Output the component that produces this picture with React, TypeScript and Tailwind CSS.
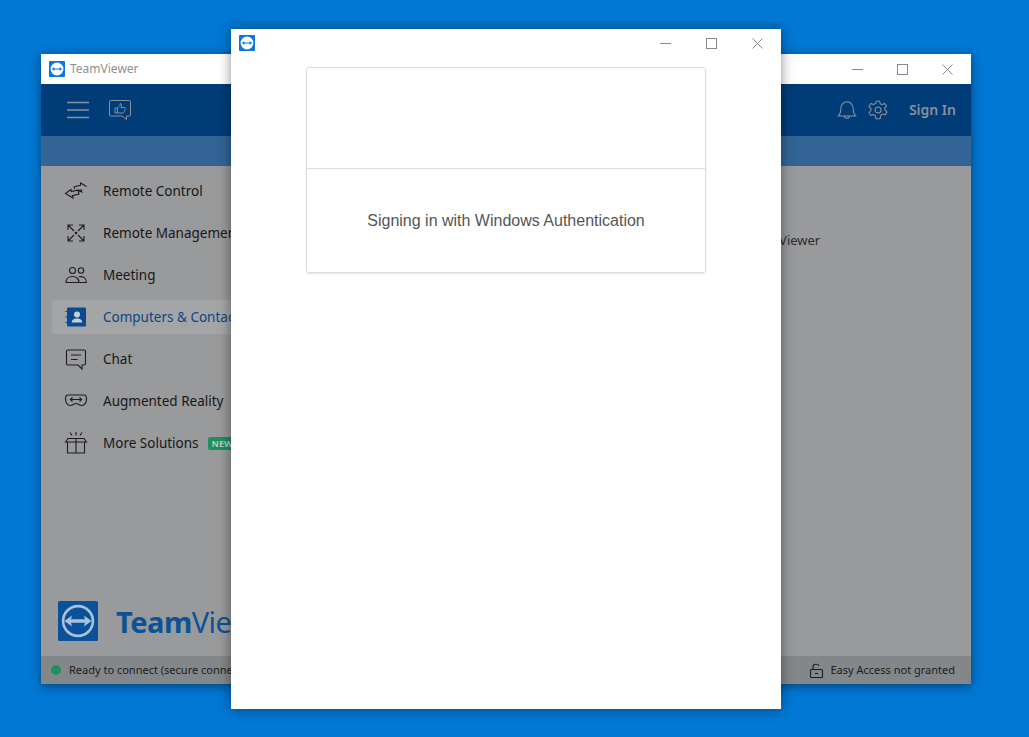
import React from "react";

function Logo({ size, radius = 1 }: { size: number; radius?: number }) {
  return (
    <svg width={size} height={size} viewBox="0 0 40 40" className="shrink-0">
      <rect width="40" height="40" rx={radius} fill="currentColor" />
      <circle cx="20" cy="20" r="16.2" fill="#ffffff" fillOpacity="var(--lo)" />
      <circle cx="20" cy="20" r="13.6" fill="currentColor" />
      <path d="M6.5 20 L14 14.6 L13 18.3 H27 L26 14.6 L33.5 20 L26 25.4 L27 21.7 H13 L14 25.4 Z" fill="#ffffff" fillOpacity="var(--lo)" />
    </svg>
  );
}

function SmallLogo() {
  return (
    <svg width="16" height="16" viewBox="0 0 16 16" className="shrink-0">
      <rect width="16" height="16" rx="1" fill="#0e74e0" />
      <circle cx="8" cy="8" r="6.4" fill="#ffffff" />
      <path d="M2.8 8 L5.6 6 L5.3 7.4 H10.7 L10.4 6 L13.2 8 L10.4 10 L10.7 8.6 H5.3 L5.6 10 Z" fill="#0e74e0" />
    </svg>
  );
}

function WinControls({ gap }: { gap: string }) {
  return (
    <div className={`flex items-center text-[#8a8a8a] ${gap}`}>
      <svg width="11" height="11" viewBox="0 0 11 11"><path d="M0 5.5 H11" stroke="currentColor" fill="none" /></svg>
      <svg width="11" height="11" viewBox="0 0 11 11"><rect x="0.5" y="0.5" width="10" height="10" stroke="currentColor" fill="none" /></svg>
      <svg width="11" height="11" viewBox="0 0 11 11"><path d="M0.5 0.5 L10.5 10.5 M10.5 0.5 L0.5 10.5" stroke="currentColor" fill="none" /></svg>
    </div>
  );
}

const ic = { fill: "none", stroke: "currentColor", strokeWidth: 1.1 } as const;

const items: { label: string; icon: React.ReactNode; active?: boolean; badge?: boolean }[] = [
  {
    label: "Remote Control",
    icon: (
      <svg width="24" height="24" viewBox="0 0 24 24" {...ic}>
        <path d="M1.5 14.5 L7 10.5 L7.4 12.6 L14 11 L15 15 L8.4 16.7 L9 19 Z" />
        <path d="M22.5 7.5 L16.6 4 L16.5 6.2 L10 7.8 L10.6 9.8 M14.6 11.6 L17.4 11 L17.8 13 Z" />
      </svg>
    ),
  },
  {
    label: "Remote Management",
    icon: (
      <svg width="24" height="24" viewBox="0 0 24 24" {...ic}>
        <circle cx="12" cy="12" r="1.3" fill="currentColor" stroke="none" />
        <path d="M4 9 V4 H9 M4 4 L10 10 M20 9 V4 H15 M20 4 L14 10 M4 15 V20 H9 M4 20 L10 14 M20 15 V20 H15 M20 20 L14 14" />
      </svg>
    ),
  },
  {
    label: "Meeting",
    icon: (
      <svg width="24" height="24" viewBox="0 0 24 24" {...ic}>
        <circle cx="8.5" cy="7.5" r="3" />
        <circle cx="17" cy="7.5" r="2.7" />
        <path d="M2 19.5 C2 15.5 5 13.5 8.5 13.5 C12 13.5 15 15.5 15 19.5 Z" />
        <path d="M15 13.8 C19 13 22.5 15 22.5 19.5 H15.5" />
      </svg>
    ),
  },
  {
    label: "Computers & Contacts",
    active: true,
    icon: (
      <svg width="24" height="24" viewBox="0 0 24 24">
        <rect x="3" y="2.5" width="19" height="19" rx="1" fill="#0a4a90" />
        <circle cx="13" cy="9.5" r="3" fill="#c8cdd3" />
        <path d="M7.8 17.5 C7.8 14.5 10 13.5 13 13.5 C16 13.5 18.2 14.5 18.2 17.5 Z" fill="#c8cdd3" />
        <path d="M1.5 6.5 H4.5 M1.5 12 H4.5 M1.5 17.5 H4.5" stroke="#0a4a90" strokeWidth="1.2" />
      </svg>
    ),
  },
  {
    label: "Chat",
    icon: (
      <svg width="24" height="24" viewBox="0 0 24 24" {...ic}>
        <path d="M4 3 H20 A1.5 1.5 0 0 1 21.5 4.5 V16.5 A1.5 1.5 0 0 1 20 18 H18 V22 L14 18 H4 A1.5 1.5 0 0 1 2.500 16.5 V4.500 A1.500 1.500 0 0 1 4 3 Z" />
        <path d="M7 8 H17 M7 12.500 H13.500" />
      </svg>
    ),
  },
  {
    label: "Augmented Reality",
    icon: (
      <svg width="24" height="24" viewBox="0 0 24 24" {...ic}>
        <path d="M4 6 H20 C22 6 22.500 7.500 22.500 9.500 C22.500 13.500 21 16.500 17.500 16.500 C15 16.500 14.500 14.500 12 14.500 C9.500 14.500 9 16.500 6.500 16.500 C3 16.500 1.500 13.500 1.500 9.500 C1.500 7.500 2 6 4 6 Z" />
        <path d="M6.500 10.500 H17.500 M8.500 8.500 L6.500 10.500 L8.500 12.500 M15.500 8.500 L17.500 10.500 L15.500 12.500" />
      </svg>
    ),
    badge: true,
  },
  {
    label: "More Solutions",
    icon: (
      <svg width="24" height="24" viewBox="0 0 24 24" {...ic}>
        <path d="M3.500 11 V22 H20.500 V11 M1.500 11 L4 7.500 H20 L22.500 11 Z M12 7.500 V22" />
        <path d="M12 1 V4.500 M6 1.500 L8 4.500 M18 1.500 L16 4.500" />
      </svg>
    ),
    badge: true,
  },
];

export default function App() {
  return (
    <div
      className="relative h-[737px] w-[1029px] overflow-hidden bg-[#0078d4]"
      style={{ fontFamily: '"Noto Sans", sans-serif' }}
    >
      {/* Back window */}
      <div className="absolute left-[41px] top-[54px] flex h-[630px] w-[930px] flex-col bg-[#999a9b] shadow-[0_2px_10px_rgba(0,0,0,0.45)]">
        <div className="flex h-[30px] shrink-0 items-center justify-between bg-white pl-2 pr-[18px]">
          <div className="flex items-center gap-[5px]">
            <SmallLogo />
            <span className="text-xs text-[#8e8e8e]">TeamViewer</span>
          </div>
          <WinControls gap="gap-[34px]" />
        </div>

        <div className="flex h-[52px] shrink-0 items-center justify-between bg-[#003c78] pl-[26px] pr-[15px] text-[#8c9098]">
          <div className="flex items-center gap-[20px]">
            <svg width="22" height="18" viewBox="0 0 22 18" fill="none" stroke="currentColor" strokeWidth="1.6">
              <path d="M0 1.500 H22 M0 9 H22 M0 16.500 H22" />
            </svg>
            <svg width="22" height="20" viewBox="0 0 22 20" {...ic} strokeWidth="1">
              <path d="M1.500 0.500 H20.500 A1 1 0 0 1 21.500 1.500 V15 A1 1 0 0 1 20.500 16 H17.500 V19.500 L13 16 H1.500 A1 1 0 0 1 0.500 15 V1.500 A1 1 0 0 1 1.500 0.500 Z" />
              <path d="M6 8 H8.500 V13 H6 Z M8.500 8 L11 5.500 V3.500 C12.500 3.500 12.800 5 12 7.500 H15.500 C16.500 7.500 16.500 9 15.800 9.500 C16.300 10.500 15.800 11.500 15 11.800 C15 12.800 14.500 13 13.500 13 H10 L8.500 12.300" />
            </svg>
          </div>
          <div className="flex items-center">
            <svg width="20" height="20" viewBox="0 0 20 20" {...ic} className="mr-[11px]">
              <path d="M1.500 16 C3 14.500 3.700 13 3.700 9.500 C3.700 5 6.500 1.700 10 1.700 C13.500 1.700 16.300 5 16.300 9.500 C16.300 13 17 14.500 18.500 16 Z" />
              <path d="M7.500 16 C7.500 19 12.500 19 12.500 16" />
            </svg>
            <svg width="20" height="20" viewBox="0 0 24 24" fill="none" stroke="currentColor" strokeWidth="1.300" className="mr-[21px]">
              <circle cx="12" cy="12" r="3.600" />
              <path d="M10 1.500 H14 L14.700 4.600 L17.200 5.600 L19.900 4 L22.300 7.200 L20 9.400 L20.400 12 L22.800 14.300 L20.500 17.800 L17.500 16.800 L15.200 18.600 L14.500 22.500 H9.500 L8.800 18.800 L6.500 17.500 L3.500 18.600 L1.300 15 L3.600 12.600 L3.400 10 L1.200 7.800 L3.400 4.300 L6.500 5.400 L9 4.200 Z" strokeLinejoin="round" />
            </svg>
            <span className="text-sm font-semibold">Sign In</span>
          </div>
        </div>

        <div className="h-[30px] shrink-0 bg-[#336496]" />

        <div className="flex min-h-0 flex-1">
          <nav className="flex w-[230px] shrink-0 flex-col gap-[8px] pl-[11px] pt-[8px]">
            {items.map((it) => (
              <div
                key={it.label}
                className={`flex h-[34px] items-center overflow-hidden whitespace-nowrap rounded-l-[4px] pl-[12px] text-[13.500px] ${
                  it.active ? "bg-[#a4a5a6] text-[#0d4685]" : "text-[#17171a]"
                }`}
              >
                <span className={it.active ? "text-[#0a4a90]" : "text-[#1d1d20]"}>{it.icon}</span>
                <span className="ml-[15px]">{it.label}</span>
                {it.badge && (
                  <span className="ml-[9px] rounded-[2px] bg-[#1f8f5f] px-[4px] text-[9px] font-bold leading-[13px] text-[#b9c9c0]">
                    NEW
                  </span>
                )}
              </div>
            ))}
            <div className="mt-auto flex items-center gap-[18px] pb-[15px] pl-[6px]">
              <div className="text-[#0a5199] [--lo:0.65]">
                <Logo size={40} radius={1.5} />
              </div>
              <span className="text-[29px] leading-none tracking-[-0.5px] text-[#0d5296]">
                <span className="font-bold">Team</span>Viewer
              </span>
            </div>
          </nav>
          <main className="flex-1 pl-[475px] pt-[65px] text-[13px] text-[#2b2c30]">
            <p className="whitespace-nowrap">TeamViewer</p>
          </main>
        </div>

        <div className="flex h-[28px] shrink-0 items-center justify-between bg-[#848789] pl-[10px] pr-[16px] text-[11px] text-[#1b1c20]">
          <div className="flex items-center gap-[8px]">
            <span className="h-[10px] w-[10px] rounded-full bg-[#1f8f5f]" />
            <span>Ready to connect (secure connection)</span>
          </div>
          <div className="flex items-center gap-[7px]">
            <svg width="15" height="15" viewBox="0 0 15 15" fill="none" stroke="currentColor" strokeWidth="1.100">
              <rect x="1.500" y="6.500" width="12" height="8" rx="1" />
              <path d="M4 6.500 V3.500 C4 0.500 9.500 0.500 10 3" />
              <path d="M6 10.500 H9" />
            </svg>
            <span>Easy Access not granted</span>
          </div>
        </div>
      </div>

      {/* Front window */}
      <div className="absolute left-[231px] top-[29px] flex h-[680px] w-[550px] flex-col bg-white shadow-[0_0_12px_rgba(0,0,0,0.45)]">
        <div className="flex h-[28px] shrink-0 items-center justify-between pl-[8px] pr-[18px]">
          <SmallLogo />
          <WinControls gap="gap-[35px]" />
        </div>
        <div className="ml-[75px] mt-[10px] h-[206px] w-[400px] rounded-[3px] border border-[#dddddd] shadow-[0_1px_2px_rgba(0,0,0,0.1)]">
          <div className="h-[101px] border-b border-[#dddddd]" />
          <div
            className="flex h-[103px] items-center justify-center text-base text-[#555555]"
            style={{ fontFamily: '"Liberation Sans", sans-serif' }}
          >
            Signing in with Windows Authentication
          </div>
        </div>
      </div>
    </div>
  );
}
